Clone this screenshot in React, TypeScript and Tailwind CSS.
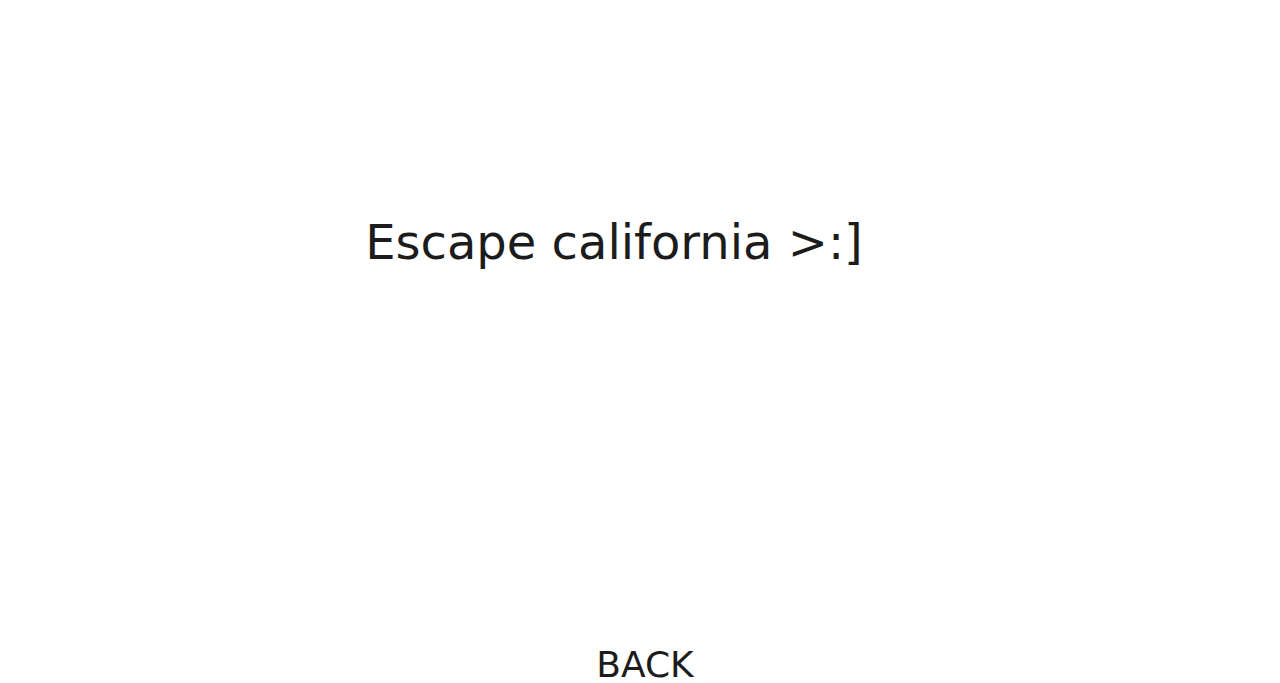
export default function App() {
  return (
    <div
      className="flex h-[683px] w-full flex-col items-center overflow-hidden bg-white text-[#1c1c1c]"
      style={{ fontFamily: '"Comic Sans MS", "DejaVu Sans", sans-serif' }}
    >
      <h1 className="mt-[214px] pr-[52px] text-[48px] leading-[56px] font-normal">
        Escape california &gt;:]
      </h1>
      <button className="mt-auto pl-[10px] text-[36px] leading-none">
        BACK
      </button>
    </div>
  );
}
